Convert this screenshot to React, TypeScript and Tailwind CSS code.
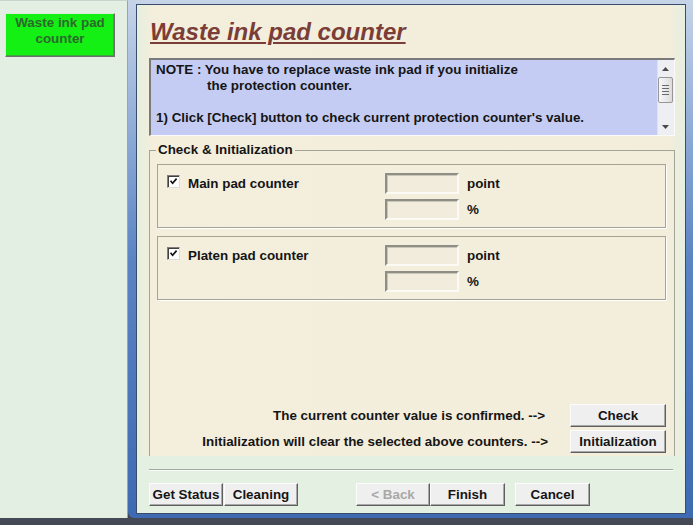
import React from "react";

const txt = "text-[13.4px] leading-[16px] font-bold text-[#151515]";

function Btn({ children, w, disabled = false, className = "" }: { children: React.ReactNode; w: string; disabled?: boolean; className?: string }) {
  return (
    <div
      className={`h-[23px] ${w} flex items-center justify-center bg-[#efefef] border border-t-[#fcfcfc] border-l-[#fcfcfc] border-r-[#5f5f5f] border-b-[#5f5f5f] shadow-[inset_-1px_-1px_0_#a8a8a8] text-[13.4px] font-bold leading-none ${disabled ? "text-[#a8a8a8]" : "text-[#151515]"} ${className}`}
    >
      {children}
    </div>
  );
}

function CheckBox() {
  return (
    <div className="w-[13px] h-[13px] shrink-0 bg-white border border-t-[#7f7f7f] border-l-[#7f7f7f] border-r-[#dcdcdc] border-b-[#dcdcdc] shadow-[inset_1px_1px_0_#404040] flex items-center justify-center">
      <svg width="9" height="9" viewBox="0 0 9 9">
        <polyline points="1.5,3.8 3.6,6.2 7.6,1.6" fill="none" stroke="#111" strokeWidth="1.7" />
      </svg>
    </div>
  );
}

function FieldRow({ unit }: { unit: string }) {
  return (
    <div className="flex items-center h-[21px]">
      <div className="w-[74px] h-[21px] bg-[#f1ecdc] border-2 border-t-[#8e8e86] border-l-[#8e8e86] border-r-[#fbfaf4] border-b-[#fbfaf4] shadow-[inset_1px_1px_0_#c9c6b8]" />
      <span className={`ml-[8px] ${txt}`}>{unit}</span>
    </div>
  );
}

function Counter({ label, className = "" }: { label: string; className?: string }) {
  return (
    <div className={`h-[64px] border border-[#a3a396] shadow-[1px_1px_0_#ffffff] flex pt-[8px] pl-[9px] ${className}`}>
      <div className="w-[218px] flex items-start pt-[2px]">
        <CheckBox />
        <span className={`ml-[8px] mt-[1px] ${txt}`}>{label}</span>
      </div>
      <div className="flex flex-col gap-[5px]">
        <FieldRow unit="point" />
        <FieldRow unit="%" />
      </div>
    </div>
  );
}

function ScrollBar() {
  return (
    <div className="w-[17px] h-full flex flex-col bg-[#eeeff3] shadow-[inset_1px_0_0_#e0e2ea]">
      <div className="h-[17px] flex items-center justify-center">
        <svg width="7" height="4" viewBox="0 0 7 4">
          <polygon points="0,4 3.5,0 7,4" fill="#4a4a4a" />
        </svg>
      </div>
      <div className="mx-[1px] h-[26px] rounded-[2px] border border-[#979797] bg-gradient-to-r from-[#f7f7f7] to-[#dcdcdc] flex flex-col items-center justify-center gap-[2px]">
        <div className="w-[7px] h-[1px] bg-[#6a6a6a]" />
        <div className="w-[7px] h-[1px] bg-[#6a6a6a]" />
        <div className="w-[7px] h-[1px] bg-[#6a6a6a]" />
        <div className="w-[7px] h-[1px] bg-[#6a6a6a]" />
      </div>
      <div className="flex-1" />
      <div className="h-[17px] flex items-center justify-center">
        <svg width="7" height="4" viewBox="0 0 7 4">
          <polygon points="0,0 3.5,4 7,0" fill="#4a4a4a" />
        </svg>
      </div>
    </div>
  );
}

export default function App() {
  return (
    <div className="w-[693px] h-[525px] overflow-hidden flex flex-col bg-[#3f4550] font-['Liberation_Sans',Arial,sans-serif]">
      <div className="flex h-[518px]">
        {/* left panel */}
        <div className="w-[128px] h-full bg-[#e3efe2] border-r border-[#9aa4ad] border-t border-t-[#c9d2cc]">
          <div className="ml-[5px] mt-[12px] w-[110px] h-[44px] bg-[#14f014] border border-t-[#d8ecd8] border-l-[#d8ecd8] border-r-[#6f6f6f] border-b-[#6f6f6f] shadow-[inset_-1px_-1px_0_#3aa83a] flex flex-col items-center pt-[1px]">
            <span className="text-[13.4px] leading-[16px] font-bold text-[#2c6a2c]">Waste ink pad</span>
            <span className="text-[13.4px] leading-[16px] font-bold text-[#2c6a2c]">counter</span>
          </div>
        </div>

        {/* window frame */}
        <div className="flex-1 h-full pl-[8px] pt-[4px] pr-[7px] pb-[4px] rounded-bl-[6px] bg-gradient-to-b from-[#c6d4e8] via-[#5b84c4] to-[#3e6ab2]">
          <div className="h-full border border-[#3b4c6b] bg-[#e4f0e2] flex flex-col">
            {/* cream page */}
            <div className="h-[451px] bg-[linear-gradient(to_right,#e6efdf,#f4eedc_3%,#f3eddc_97%,#e6efe0)] flex flex-col pl-[12px]">
              <div className="h-[53px] pl-[1px] pt-[13px]">
                <span className="text-[24px] leading-[28px] font-bold italic text-[#7b3d38] underline decoration-[2px] underline-offset-[2px]">
                  Waste ink pad counter
                </span>
              </div>

              <div className="w-[526px] h-[78px] flex bg-[#c4ccf4] border-t-2 border-l-2 border-t-[#7a7a7a] border-l-[#7a7a7a] border-r border-b border-r-[#fafafa] border-b-[#fafafa]">
                <div className={`flex-1 pl-[5px] pt-[2px] ${txt}`}>
                  <div>NOTE : You have to replace waste ink pad if you initialize</div>
                  <div className="pl-[51px]">the protection counter.</div>
                  <div className="h-[16px]" />
                  <div>1) Click [Check] button to check current protection counter&apos;s value.</div>
                </div>
                <ScrollBar />
              </div>

              <fieldset className="mt-[6px] w-[526px] h-[314px] border border-b-0 border-[#a3a396] pl-[7px] pr-[8px] pt-[6px]">
                <legend className={`-ml-[1px] px-[2px] ${txt}`}>Check &amp; Initialization</legend>
                <Counter label="Main pad counter" />
                <Counter label="Platen pad counter" className="mt-[8px]" />
                <div className="mt-[104px] flex justify-end items-center h-[23px]">
                  <span className={txt}>The current counter value is confirmed. --&gt;</span>
                  <Btn w="w-[96px]" className="ml-[25px]">Check</Btn>
                </div>
                <div className="mt-[3px] flex justify-end items-center h-[23px]">
                  <span className={txt}>Initialization will clear the selected above counters. --&gt;</span>
                  <Btn w="w-[96px]" className="ml-[22px]">Initialization</Btn>
                </div>
              </fieldset>
            </div>

            {/* bottom */}
            <div className="flex-1 pt-[13px]">
              <div className="mx-[12px] h-[1px] bg-[#a2a79f]" />
              <div className="mx-[12px] h-[1px] bg-[#fbfdfa]" />
              <div className="mt-[12px] flex pl-[12px]">
                <Btn w="w-[74px]">Get Status</Btn>
                <Btn w="w-[74px]" className="ml-[1px]">Cleaning</Btn>
                <Btn w="w-[74px]" className="ml-[58px]" disabled>&lt; Back</Btn>
                <Btn w="w-[75px]">Finish</Btn>
                <Btn w="w-[75px]" className="ml-[10px]">Cancel</Btn>
              </div>
            </div>
          </div>
        </div>
      </div>
      <div className="h-[7px] bg-[#434a56]" />
    </div>
  );
}
